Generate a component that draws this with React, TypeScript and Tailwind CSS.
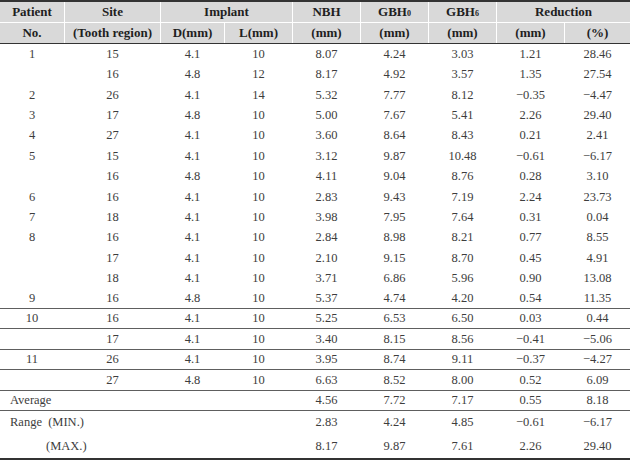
import React from 'react';

const cols = 'grid grid-cols-[64px_95px_63px_67px_67px_67px_67px_67px_65px] gap-x-px';

const rows: { cells: string[]; line?: boolean }[] = [
  { cells: ['1', '15', '4.1', '10', '8.07', '4.24', '3.03', '1.21', '28.46'] },
  { cells: ['', '16', '4.8', '12', '8.17', '4.92', '3.57', '1.35', '27.54'] },
  { cells: ['2', '26', '4.1', '14', '5.32', '7.77', '8.12', '−0.35', '−4.47'] },
  { cells: ['3', '17', '4.8', '10', '5.00', '7.67', '5.41', '2.26', '29.40'] },
  { cells: ['4', '27', '4.1', '10', '3.60', '8.64', '8.43', '0.21', '2.41'] },
  { cells: ['5', '15', '4.1', '10', '3.12', '9.87', '10.48', '−0.61', '−6.17'] },
  { cells: ['', '16', '4.8', '10', '4.11', '9.04', '8.76', '0.28', '3.10'] },
  { cells: ['6', '16', '4.1', '10', '2.83', '9.43', '7.19', '2.24', '23.73'] },
  { cells: ['7', '18', '4.1', '10', '3.98', '7.95', '7.64', '0.31', '0.04'] },
  { cells: ['8', '16', '4.1', '10', '2.84', '8.98', '8.21', '0.77', '8.55'] },
  { cells: ['', '17', '4.1', '10', '2.10', '9.15', '8.70', '0.45', '4.91'] },
  { cells: ['', '18', '4.1', '10', '3.71', '6.86', '5.96', '0.90', '13.08'] },
  { cells: ['9', '16', '4.8', '10', '5.37', '4.74', '4.20', '0.54', '11.35'], line: true },
  { cells: ['10', '16', '4.1', '10', '5.25', '6.53', '6.50', '0.03', '0.44'], line: true },
  { cells: ['', '17', '4.1', '10', '3.40', '8.15', '8.56', '−0.41', '−5.06'], line: true },
  { cells: ['11', '26', '4.1', '10', '3.95', '8.74', '9.11', '−0.37', '−4.27'], line: true },
  { cells: ['', '27', '4.8', '10', '6.63', '8.52', '8.00', '0.52', '6.09'], line: true },
];

const H = ({ children, className = '' }: { children: React.ReactNode; className?: string }) => (
  <div className={`bg-[#d9d9d9] h-[20px] flex items-center justify-center ${className}`}>{children}</div>
);

const Sub = ({ n }: { n: string }) => <span className="text-[8px] leading-none relative top-[2px]">{n}</span>;

export default function App() {
  return (
    <div className="w-[630px] h-[460px] bg-white text-[12.5px] text-[#3d3d3d]" style={{ fontFamily: '"Liberation Serif", serif' }}>
      {/* Header */}
      <div className="border-t-2 border-b border-[#333] bg-white">
        <div className={`${cols} gap-y-px font-bold text-[13px] text-[#1f1f1f]`}>
          <H>Patient</H>
          <H>Site</H>
          <H className="col-span-2">Implant</H>
          <H>NBH</H>
          <H>GBH<Sub n="0" /></H>
          <H>GBH<Sub n="6" /></H>
          <H className="col-span-2">Reduction</H>
          <H>No.</H>
          <H>(Tooth region)</H>
          <H>D(mm)</H>
          <H>L(mm)</H>
          <H>(mm)</H>
          <H>(mm)</H>
          <H>(mm)</H>
          <H>(mm)</H>
          <H>(%)</H>
        </div>
      </div>

      {/* Body */}
      {rows.map((r, i) => (
        <div key={i} className={`${cols} h-[20.4px] items-center ${r.line ? 'border-b border-[#5e5e5e]' : ''}`}>
          {r.cells.map((c, j) => (
            <div key={j} className="text-center">{c}</div>
          ))}
        </div>
      ))}

      <div className={`${cols} h-[20.4px] items-center border-b border-[#5e5e5e]`}>
        <div className="col-span-4 pl-[10px]">Average</div>
        {['4.56', '7.72', '7.17', '0.55', '8.18'].map((c, j) => (
          <div key={j} className="text-center">{c}</div>
        ))}
      </div>

      <div className="border-b-2 border-[#333]">
        <div className={`${cols} h-[23.5px] items-center`}>
          <div className="col-span-4 pl-[10px]">Range&nbsp;&nbsp;(MIN.)</div>
          {['2.83', '4.24', '4.85', '−0.61', '−6.17'].map((c, j) => (
            <div key={j} className="text-center">{c}</div>
          ))}
        </div>
        <div className={`${cols} h-[23.5px] items-center`}>
          <div className="col-span-4 pl-[46px]">(MAX.)</div>
          {['8.17', '9.87', '7.61', '2.26', '29.40'].map((c, j) => (
            <div key={j} className="text-center">{c}</div>
          ))}
        </div>
      </div>
    </div>
  );
}
